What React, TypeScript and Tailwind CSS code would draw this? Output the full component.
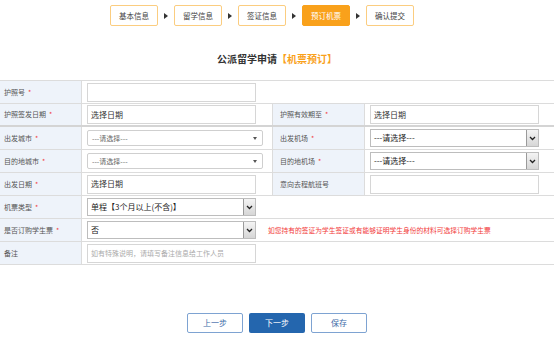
import React from "react";

const font = { fontFamily: '"Noto Sans CJK SC", "Noto Sans", sans-serif' };

const steps = ["基本信息", "留学信息", "签证信息", "预订机票", "确认提交"];

function Arrow() {
  return <div className="w-0 h-0 border-y-[3px] border-y-transparent border-l-[4px] border-l-[#333] mx-[6px]"></div>;
}

function Label({ text, req, right }: { text: string; req?: boolean; right?: boolean }) {
  return (
    <div
      className={`bg-[#eef3fa] border-r border-[#dcdcdc] flex items-center text-[7px] text-[#555] ${
        right ? "pl-[7px]" : "pl-[4px]"
      }`}
    >
      {text}
      {req && <span className="text-[#f04040] ml-[3px]">*</span>}
    </div>
  );
}

function TextInput({ value, placeholder, w = "w-[169px]" }: { value?: string; placeholder?: string; w?: string }) {
  return (
    <div className={`${w} h-[19px] border border-[#d6d6d6] bg-white flex items-center px-[3px] text-[8px]`}>
      {value && <span className="text-[#333]">{value}</span>}
      {placeholder && <span className="text-[#aaa] text-[7px]">{placeholder}</span>}
    </div>
  );
}

function CitySelect() {
  return (
    <div className="w-[176px] h-[16px] border border-[#cfcfcf] rounded-[2px] bg-white flex items-center justify-between px-[4px] text-[7px] text-[#666]">
      <span>---请选择---</span>
      <div className="w-0 h-0 border-x-[2px] border-x-transparent border-t-[3px] border-t-[#555] mr-[1px]"></div>
    </div>
  );
}

function NativeSelect({ value, w = "w-[169px]" }: { value: string; w?: string }) {
  return (
    <div className={`${w} h-[18px] border border-[#bdbdbd] bg-white flex items-center text-[8px] text-[#222]`}>
      <span className="flex-1 pl-[3px]">{value}</span>
      <div className="w-[12px] h-full border-l border-[#9a9a9a] bg-gradient-to-b from-[#f4f4f4] to-[#d6d6d6] flex items-center justify-center">
        <svg width="7" height="5" viewBox="0 0 7 5">
          <path d="M1 1 L3.5 3.5 L6 1" fill="none" stroke="#222" strokeWidth="1.3" />
        </svg>
      </div>
    </div>
  );
}

function Cell({ children, last }: { children?: React.ReactNode; last?: boolean }) {
  return (
    <div className={`flex items-center pl-[5px] ${last ? "" : "border-r border-[#dcdcdc]"}`}>{children}</div>
  );
}

function Row({ children, thick }: { children: React.ReactNode; thick?: boolean }) {
  return (
    <div
      className={`grid grid-cols-[82px_191px_92px_189px] h-[23px] ${thick ? "border-b-2 border-[#d4d4d4]" : "border-b border-[#dcdcdc]"}`}
    >
      {children}
    </div>
  );
}

export default function App() {
  return (
    <div className="w-[554px] h-[338px] bg-white overflow-hidden" style={font}>
      <div className="flex items-center pl-[110px] pt-[5px]">
        {steps.map((s, i) => (
          <React.Fragment key={s}>
            <div
              className={`w-[48px] h-[21px] rounded-[2px] flex items-center justify-center text-[7.5px] ${
                i === 3 ? "bg-[#f9a11b] text-white border border-[#f9a11b]" : "border border-[#fbcd80] text-[#444]"
              }`}
            >
              {s}
            </div>
            {i < steps.length - 1 && <Arrow />}
          </React.Fragment>
        ))}
      </div>

      <div className="mt-[26px] text-center text-[10px] font-bold leading-[14px] text-[#333]">
        公派留学申请<span className="text-[#f9a11b]">【机票预订】</span>
      </div>

      <div className="mt-[14px] border-t border-[#dcdcdc]">
        <Row>
          <Label text="护照号" req />
          <div className="flex items-center pl-[5px]">
            <TextInput />
          </div>
          <div></div>
          <div></div>
        </Row>
        <Row thick>
          <Label text="护照签发日期" req />
          <Cell>
            <TextInput value="选择日期" />
          </Cell>
          <Label text="护照有效期至" req right />
          <Cell last>
            <TextInput value="选择日期" />
          </Cell>
        </Row>
        <Row>
          <Label text="出发城市" req />
          <Cell>
            <CitySelect />
          </Cell>
          <Label text="出发机场" req right />
          <Cell last>
            <NativeSelect value="---请选择---" />
          </Cell>
        </Row>
        <Row>
          <Label text="目的地城市" req />
          <Cell>
            <CitySelect />
          </Cell>
          <Label text="目的地机场" req right />
          <Cell last>
            <NativeSelect value="---请选择---" />
          </Cell>
        </Row>
        <Row>
          <Label text="出发日期" req />
          <Cell>
            <TextInput value="选择日期" />
          </Cell>
          <Label text="意向去程航班号" right />
          <Cell last>
            <TextInput />
          </Cell>
        </Row>
        <div className="grid grid-cols-[82px_1fr] h-[23px] border-b border-[#dcdcdc]">
          <Label text="机票类型" req />
          <Cell last>
            <NativeSelect value="单程【3个月以上(不含)】" />
          </Cell>
        </div>
        <div className="grid grid-cols-[82px_1fr] h-[23px] border-b border-[#dcdcdc]">
          <Label text="是否订购学生票" req />
          <div className="flex items-center pl-[5px]">
            <NativeSelect value="否" />
            <span className="ml-[12px] text-[6.75px] text-[#f23a3a]">
              如您持有的签证为学生签证或有能够证明学生身份的材料可选择订购学生票
            </span>
          </div>
        </div>
        <div className="grid grid-cols-[82px_1fr] h-[23px] border-b border-[#dcdcdc]">
          <Label text="备注" />
          <Cell last>
            <TextInput placeholder="如有特殊说明，请填写备注信息给工作人员" />
          </Cell>
        </div>
      </div>

      <div className="flex justify-center gap-[6px] mt-[48px]">
        <div className="w-[56px] h-[20px] border border-[#7ea3d2] rounded-[2px] flex items-center justify-center text-[8px] text-[#3d6aa8]">
          上一步
        </div>
        <div className="w-[56px] h-[20px] bg-[#2466ae] rounded-[2px] flex items-center justify-center text-[8px] text-white">
          下一步
        </div>
        <div className="w-[56px] h-[20px] border border-[#7ea3d2] rounded-[2px] flex items-center justify-center text-[8px] text-[#3d6aa8]">
          保存
        </div>
      </div>
    </div>
  );
}
